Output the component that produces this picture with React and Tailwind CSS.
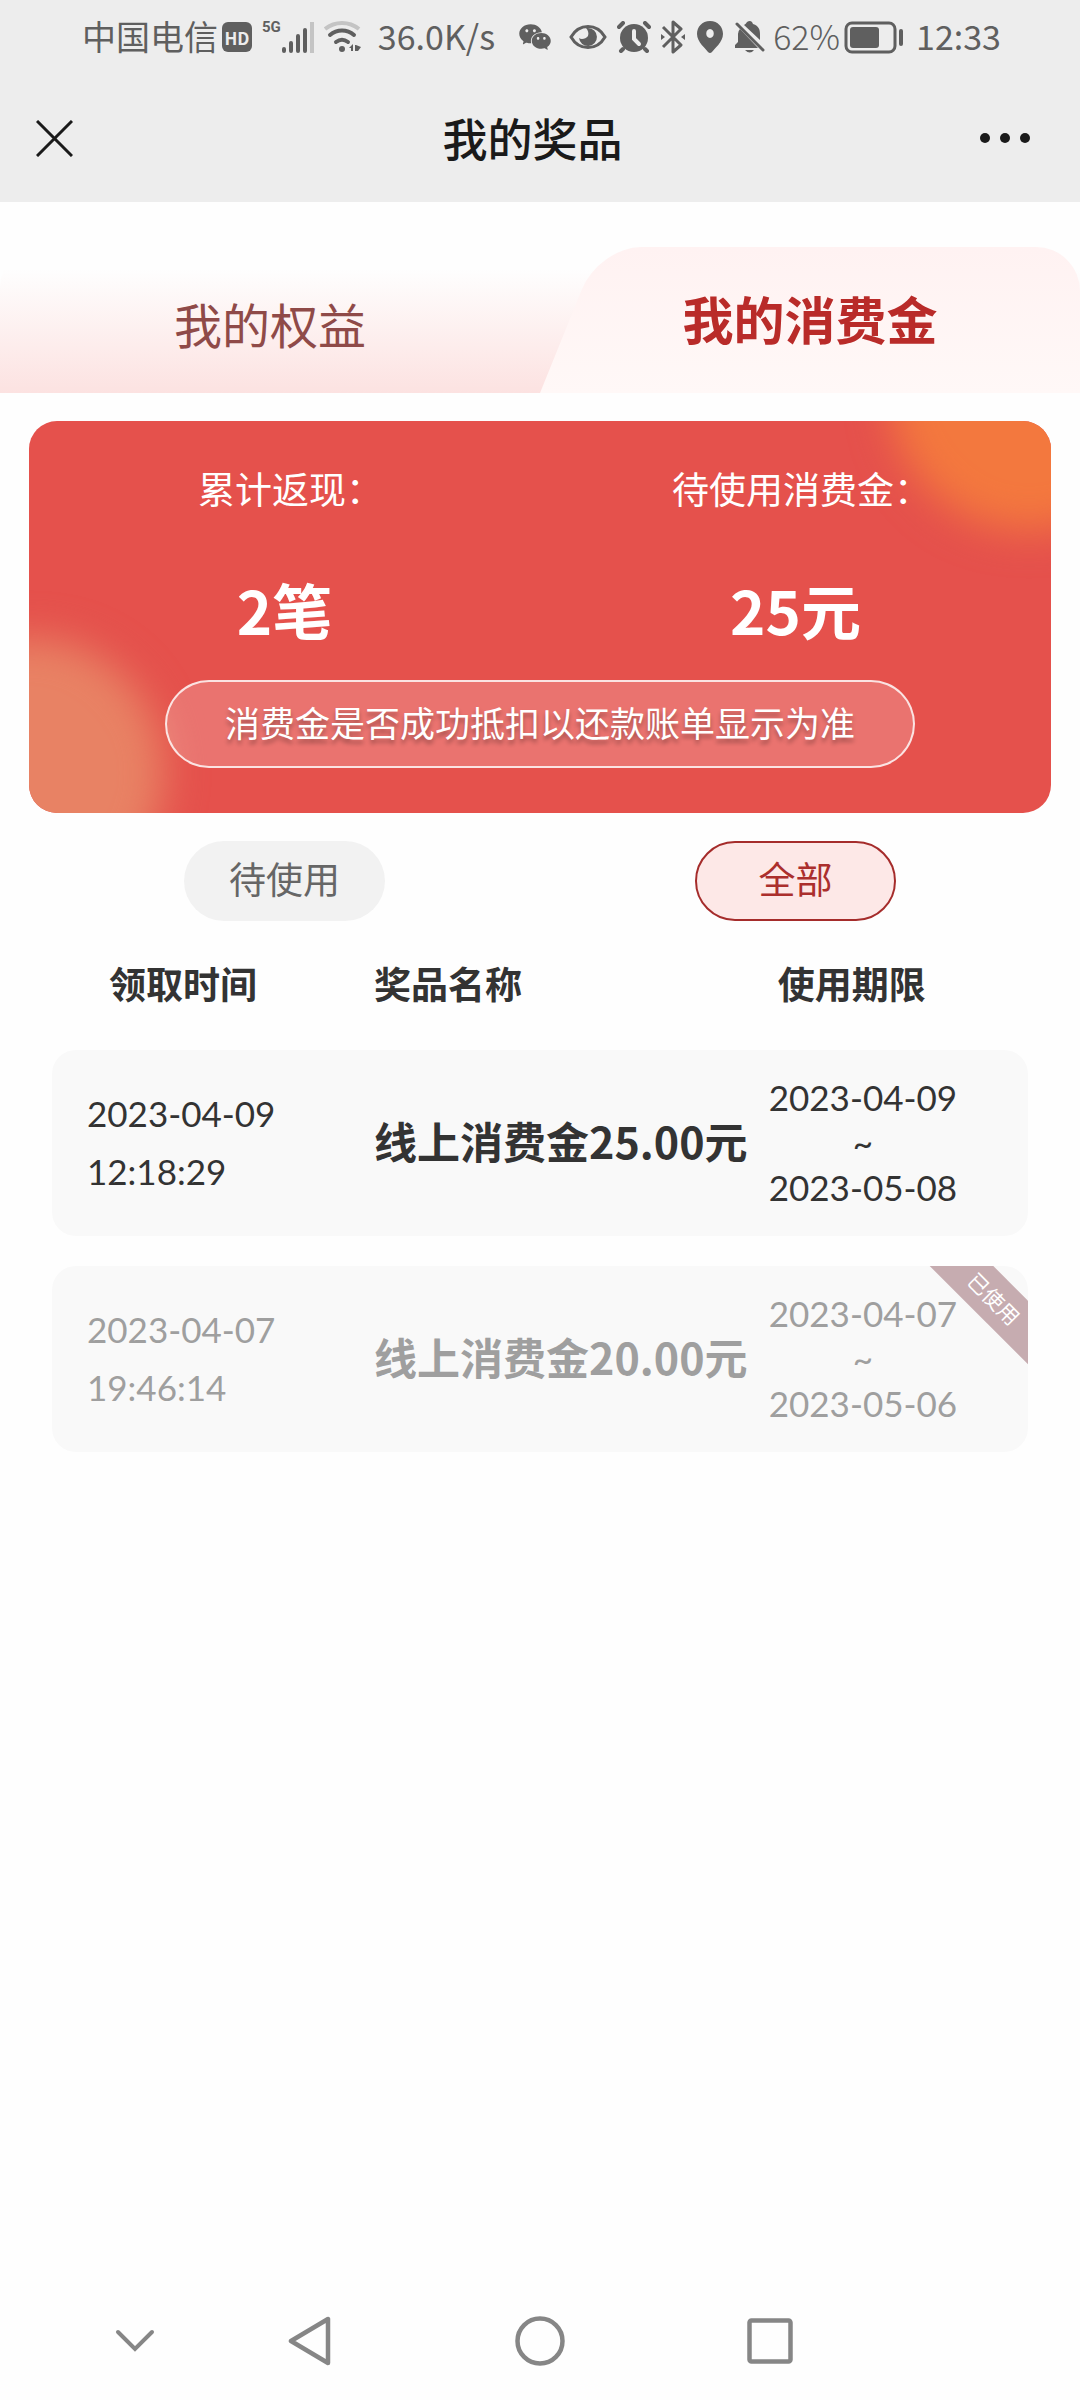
import { useState } from "react";
import { AiFillWechat } from "react-icons/ai";

const RECORDS = [
  {
    id: 1,
    date: "2023-04-09",
    time: "12:18:29",
    name: "线上消费金25.00元",
    from: "2023-04-09",
    to: "2023-05-08",
    used: false,
  },
  {
    id: 2,
    date: "2023-04-07",
    time: "19:46:14",
    name: "线上消费金20.00元",
    from: "2023-04-07",
    to: "2023-05-06",
    used: true,
  },
];

const FILTERS = [
  { key: "pending", label: "待使用" },
  { key: "all", label: "全部" },
];

function StatusBar() {
  return (
    <div className="flex h-[74px] items-center pl-[82px] text-[34px] leading-none whitespace-nowrap text-[#5f5f5f]">
      <span className="pb-0.5">中国电信</span>
      <span className="ml-1 flex size-[30px] items-center justify-center rounded-[6px] bg-[#5f5f5f] text-[17px] font-bold text-[#ededed]">
        HD
      </span>
      <span className="ml-[10px] h-[34px] font-[Roboto] text-[15px] leading-none font-bold">
        5G
      </span>
      <svg viewBox="0 0 33 31" className="h-[31px] w-[33px]" stroke="currentColor" strokeWidth="4" strokeLinecap="round">
        <path d="M3 27v2M10 21v8M17 14v15M24 8v21" />
        <path d="M31 0v31" stroke="#c4c4c4" strokeLinecap="butt" />
      </svg>
      <svg viewBox="0 0 38 32" className="ml-[10px] h-[32px] w-[38px]" fill="none" stroke="currentColor" strokeWidth="4">
        <path d="M1 8C11 0 25 0 35 8" stroke="#c4c4c4" />
        <path d="M6 14c7-6 17-6 24 0" strokeLinecap="round" />
        <path d="M12 21c4-3 8-3 12 0" strokeLinecap="round" />
        <circle cx="18" cy="28" r="3" fill="currentColor" stroke="none" />
        <path d="M25 27l4-4v7h-2v-3zM31 24h1l5 2-3 4h-3z" fill="currentColor" stroke="none" />
      </svg>
      <span className="ml-4 pb-0.5">36.0K/s</span>
      <AiFillWechat className="ml-[22px] size-[36px]" />
      <svg viewBox="0 0 38 26" className="ml-4 h-[26px] w-[38px]" fill="none" stroke="currentColor" strokeWidth="3">
        <path d="M2 13C10 -1 28 -1 36 13C28 27 10 27 2 13z" />
        <path d="M19 4a9 9 0 1 1-9 10c2 2 7 1 9-2 1-3 0-6-2-8z" fill="currentColor" stroke="none" />
      </svg>
      <svg viewBox="0 0 34 32" className="ml-[10px] h-[32px] w-[34px]" fill="none" stroke="currentColor" strokeWidth="4" strokeLinecap="round">
        <circle cx="17" cy="17" r="14" fill="currentColor" stroke="none" />
        <path d="M2 6l4-4M32 6l-4-4M6 28l-2 2M28 28l2 2" />
        <path d="M17 10v8l5 5" stroke="#ededed" />
      </svg>
      <svg viewBox="0 0 24 34" className="ml-[10px] h-[34px] w-[24px]" fill="none" stroke="currentColor" strokeWidth="3" strokeLinejoin="round">
        <path d="M2 7l18 18-8 7V2l8 7L2 27" />
        <path d="M0 14l4 3-4 3zM24 14l-4 3 4 3z" fill="currentColor" stroke="none" />
      </svg>
      <svg viewBox="0 0 26 32" className="ml-3 h-[32px] w-[26px]" fill="currentColor">
        <path
          fillRule="evenodd"
          d="M13 0C5 0 0 6 0 13c0 8 9 15 11 18q2 2 4 0c2-3 11-10 11-18C26 6 21 0 13 0zm0 8c5 0 5 9 0 9s-5-9 0-9z"
        />
      </svg>
      <svg viewBox="0 0 30 32" className="ml-3 h-[32px] w-[30px]" fill="currentColor">
        <path d="M5 8L23 27H0v-3l3-3V13q0-3 2-5zM9 4q2-1 3-3 3-2 5 0l1 2c6 2 7 6 7 10v6zM10 29h9q-4 5-9 0z" />
        <path d="M2 3L28 29" stroke="currentColor" strokeWidth="3" strokeLinecap="round" />
      </svg>
      <span className="ml-2 pb-0.5 font-light">62%</span>
      <svg viewBox="0 0 60 33" className="ml-1 h-[33px] w-[60px]" fill="none" stroke="currentColor">
        <rect x="2" y="2" width="49" height="29" rx="6" strokeWidth="3" />
        <rect x="6" y="6" width="29" height="21" rx="3" fill="currentColor" stroke="none" />
        <path d="M57 10v13" strokeWidth="4" strokeLinecap="round" />
      </svg>
      <span className="ml-3 pb-0.5">12:33</span>
    </div>
  );
}

function TitleBar() {
  return (
    <header className="flex h-[128px] items-center text-[#1a1a1a]">
      <button type="button" aria-label="关闭" className="px-9">
        <svg viewBox="0 0 37 37" className="size-[37px]" stroke="currentColor" strokeWidth="3">
          <path d="M1 1l35 35M36 1L1 36" />
        </svg>
      </button>
      <h1 className="flex-1 text-center text-[45px] font-medium">我的奖品</h1>
      <button type="button" aria-label="更多" className="pr-[50px] pl-6">
        <svg viewBox="0 0 50 10" className="h-[10px] w-[50px]" fill="currentColor">
          <circle cx="5" cy="5" r="5" />
          <circle cx="25" cy="5" r="5" />
          <circle cx="45" cy="5" r="5" />
        </svg>
      </button>
    </header>
  );
}

function Tabs() {
  return (
    <div role="tablist" className="mt-[45px] flex items-end rounded-tl-[40px] bg-linear-to-b from-[#fefefe] from-15% to-[#fce2e1]">
      <button type="button" role="tab" aria-selected="false" className="h-[130px] flex-1 pb-[10px] text-[48px] text-[#8f4a48]">
        我的权益
      </button>
      <button
        type="button"
        role="tab"
        aria-selected="true"
        className="relative h-[146px] flex-1 pb-1 text-[51px] font-bold text-[#b92b29]"
      >
        {/* slanted left edge, straight right edge */}
        <span className="absolute inset-y-0 left-0 w-1/2 origin-bottom-left -skew-x-[22deg] rounded-tl-[42px] bg-linear-to-b from-[#fff2f2] to-[#fff8f7]" />
        <span className="absolute inset-y-0 right-0 w-2/3 rounded-tr-[44px] bg-linear-to-b from-[#fff2f2] to-[#fff8f7]" />
        <span className="relative">我的消费金</span>
      </button>
    </div>
  );
}

function Summary() {
  return (
    <section className="relative mx-[29px] mt-7 overflow-hidden rounded-[28px] bg-[#e5514c] pt-10 pb-[45px] text-white">
      <div className="absolute -top-[170px] -right-[118px] size-[280px] rounded-full bg-[#f3783e] blur-[20px]" />
      <div className="absolute -bottom-[95px] -left-[135px] size-[270px] rounded-full bg-[#e88264] blur-[20px]" />
      <dl className="relative grid grid-cols-2 text-center">
        <div>
          <dt className="pl-3 text-[37px] leading-[54px]">累计返现：</dt>
          <dd className="mt-[49px] text-[60px] leading-[90px] font-bold">2笔</dd>
        </div>
        <div>
          <dt className="pl-3 text-[37px] leading-[54px]">待使用消费金：</dt>
          <dd className="mt-[49px] text-[60px] leading-[90px] font-bold">25元</dd>
        </div>
      </dl>
      <p className="relative mx-auto mt-[26px] w-fit rounded-full border-2 border-white/80 bg-white/20 px-[58px] pb-1 text-[35px] leading-[80px] [text-shadow:0_4px_4px_rgba(0,0,0,0.3)]">
        消费金是否成功抵扣以还款账单显示为准
      </p>
    </section>
  );
}

function RecordRow({ record }) {
  return (
    <tr className={record.used ? "text-[#9f9f9f]" : "text-[#333]"}>
      <td className="h-[186px] rounded-l-[24px] bg-[#f9f9f9] pb-0.5 pl-[35px] font-[Lato] text-[35px] leading-[58px]">
        {record.date}
        <br />
        {record.time}
      </td>
      <td className="bg-[#f9f9f9] pb-[6px] text-[43px] font-bold whitespace-nowrap">{record.name}</td>
      <td className="relative overflow-hidden rounded-r-[24px] bg-[#f9f9f9] pb-0.5 pl-[14px] font-[Lato] text-[35px] leading-[45px]">
        <div className="w-fit text-center">
          {record.from}
          <br />
          ~
          <br />
          {record.to}
        </div>
        {record.used && (
          <span className="absolute top-[10px] -right-[56px] w-[180px] rotate-45 bg-[#c6acb0] text-center font-['Noto_Sans_CJK_SC'] text-[21px] leading-[45px] text-white">
            已使用
          </span>
        )}
      </td>
    </tr>
  );
}

function NavBar() {
  return (
    <nav className="mt-auto grid h-[118px] grid-cols-[1fr_230px_230px_230px_1fr] items-center justify-items-center text-[#868686]">
      <button type="button" aria-label="收起" className="justify-self-end pr-10">
        <svg viewBox="0 0 40 24" className="h-[24px] w-[40px]" fill="none" stroke="currentColor" strokeWidth="4" strokeLinecap="round">
          <path d="M3 3l17 17L37 3" />
        </svg>
      </button>
      <button type="button" aria-label="返回">
        <svg viewBox="0 0 46 50" className="h-[50px] w-[46px]" fill="none" stroke="currentColor" strokeWidth="4.5" strokeLinejoin="round">
          <path d="M41 3v44L4 25z" />
        </svg>
      </button>
      <button type="button" aria-label="主页">
        <svg viewBox="0 0 50 50" className="size-[50px]" fill="none" stroke="currentColor" strokeWidth="4.5">
          <circle cx="25" cy="25" r="22.5" />
        </svg>
      </button>
      <button type="button" aria-label="最近任务">
        <svg viewBox="0 0 46 46" className="size-[46px]" fill="none" stroke="currentColor" strokeWidth="4.5">
          <rect x="2.5" y="2.5" width="41" height="41" rx="2" />
        </svg>
      </button>
    </nav>
  );
}

export default function App() {
  const [filter, setFilter] = useState("all");
  const rows = filter === "all" ? RECORDS : RECORDS.filter((r) => !r.used);

  return (
    <div className="flex min-h-screen flex-col bg-[#fefefe] font-['Noto_Sans_CJK_SC',sans-serif]">
      <div className="bg-[#ededed]">
        <StatusBar />
        <TitleBar />
      </div>

      <main>
        <Tabs />
        <Summary />

        {/* 筛选 */}
        <div className="mx-[29px] mt-7 grid grid-cols-2 justify-items-center">
          {FILTERS.map((f) => (
            <button
              key={f.key}
              type="button"
              aria-pressed={filter === f.key}
              onClick={() => setFilter(f.key)}
              className={`h-[80px] w-[201px] rounded-full pb-1 text-[37px] ${
                filter === f.key
                  ? "border-2 border-[#a52c2b] bg-[#fde8e7] text-[#ab2f2d]"
                  : "bg-[#f2f2f2] text-[#666]"
              }`}
            >
              {f.label}
            </button>
          ))}
        </div>

        {/* 领取记录 */}
        <div className="px-[52px]">
          <table className="w-full table-fixed border-separate border-spacing-x-0 border-spacing-y-[30px] text-left">
            <thead className="text-[37px] text-[#333]">
              <tr>
                <th className="h-[69px] w-[33%] pb-1 pl-[57px]">领取时间</th>
                <th className="w-[39%] pb-1">奖品名称</th>
                <th className="pb-1 pl-[23px]">使用期限</th>
              </tr>
            </thead>
            <tbody>
              {rows.map((r) => (
                <RecordRow key={r.id} record={r} />
              ))}
            </tbody>
          </table>
        </div>
      </main>

      <NavBar />
    </div>
  );
}
